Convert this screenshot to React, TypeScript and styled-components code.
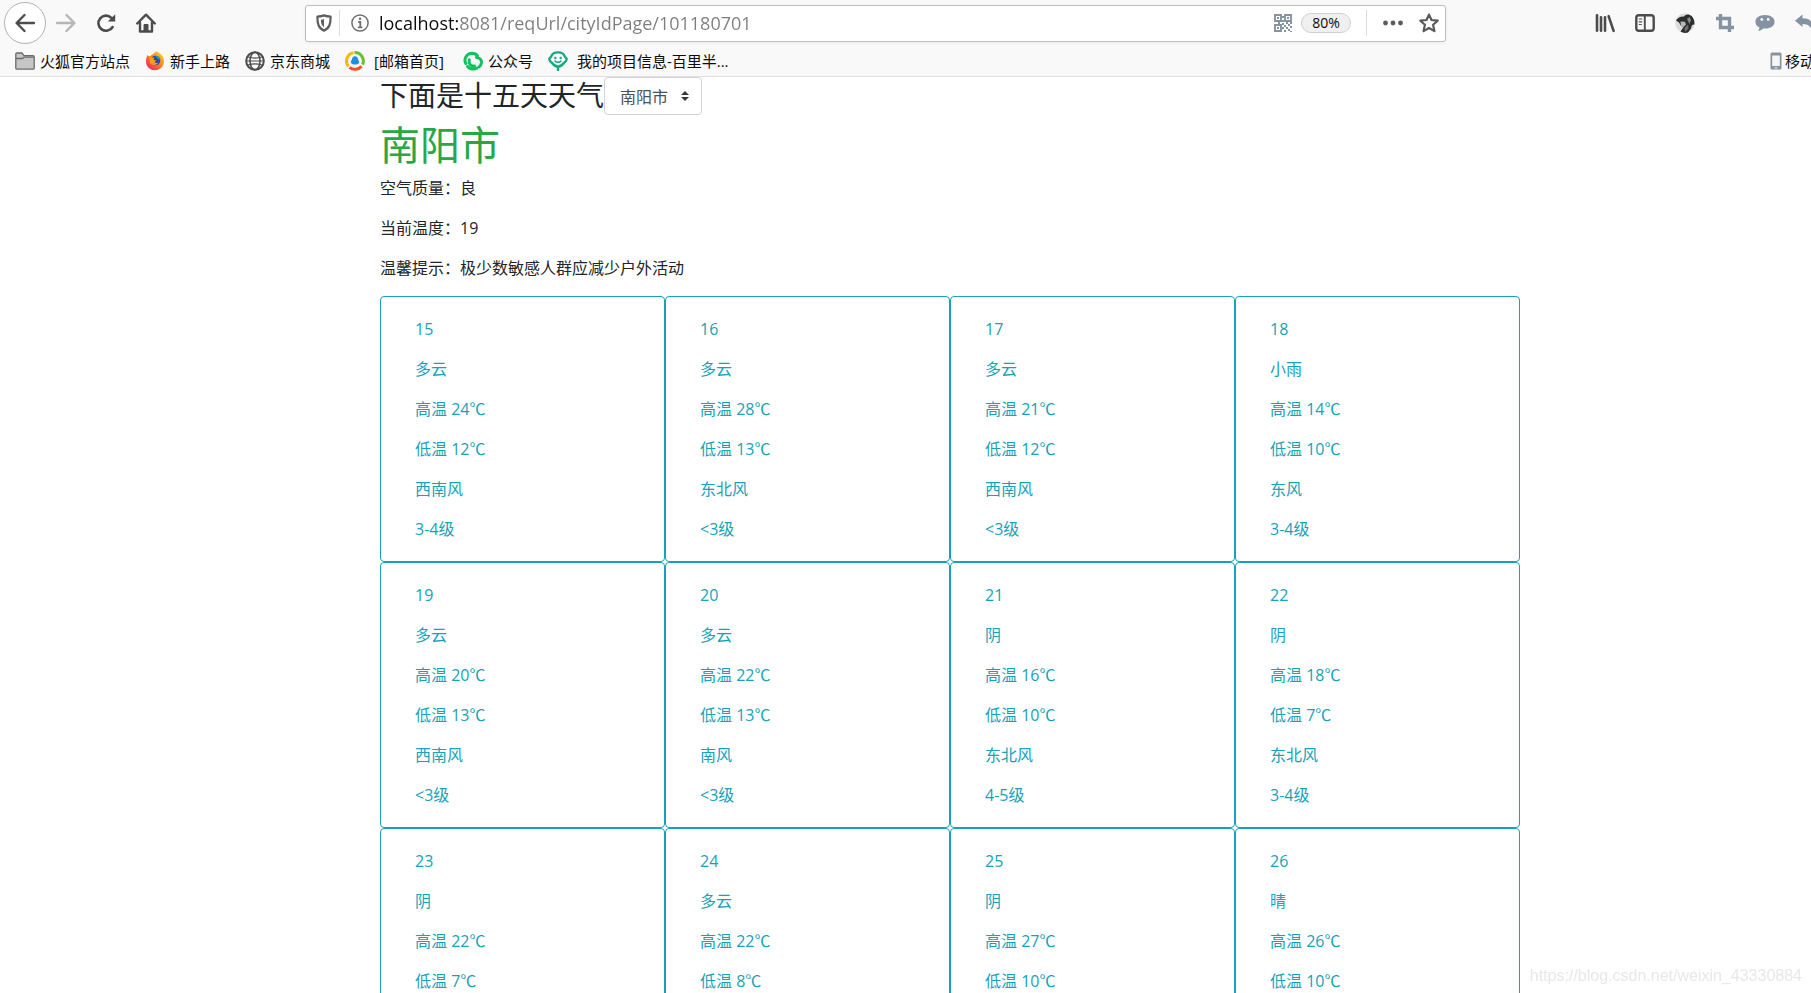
import React from "react";
import styled, { createGlobalStyle } from "styled-components";

const uiFont = `"Open Sans", "Noto Sans CJK SC", sans-serif`;

const GlobalStyle = createGlobalStyle`
  *, *::before, *::after { box-sizing: border-box; }
  body { margin: 0; background: #fff; color: #212529; font: 16px/24px ${uiFont}; }
  h1, h2, p, ul { margin: 0; padding: 0; }
  button, input, select { font: inherit; }
  svg { display: block; flex: none; }
`;

const Shell = styled.div`
  height: 100vh;
  display: flex;
  flex-direction: column;
  overflow: hidden;
`;

const Chrome = styled.header`
  flex: none;
  background: #f9f9fa;
  border-bottom: 1px solid #e0e0e1;
  overflow: hidden;
`;

const NavBar = styled.div`
  display: flex;
  align-items: center;
  height: 46px;
  padding-left: 4px;
`;

const NavButtons = styled.nav`
  flex: none;
  display: flex;
  align-items: center;
  width: 301px;
`;

const IconButton = styled.button<{ $width?: number }>`
  flex: none;
  display: flex;
  align-items: center;
  justify-content: center;
  width: ${(p) => p.$width ?? 40}px;
  height: 40px;
  padding: 0;
  border: 0;
  background: none;
`;

const BackButton = styled(IconButton)`
  width: 42px;
  height: 42px;
  border: 1px solid #b4b4b4;
  border-radius: 50%;
  background: #fff;
`;

const UrlBar = styled.div`
  flex: 1;
  min-width: 0;
  display: flex;
  align-items: center;
  height: 37px;
  padding: 0 6px 0 3px;
  border: 1px solid #bdbdbd;
  border-radius: 3px;
  background: #fff;
  box-shadow: 0 1px 4px rgba(0, 0, 0, 0.06);
`;

const Divider = styled.span`
  flex: none;
  width: 1px;
  height: 26px;
  background: #dcdcdc;
`;

const UrlInput = styled.input`
  flex: 1;
  min-width: 0;
  height: 32px;
  padding: 0;
  border: 0;
  outline: 0;
  font-size: 18px;
  color: transparent;
  background: linear-gradient(to right, #0c0c0d 79px, #7d7d7d 79px);
  background-clip: text;
  -webkit-background-clip: text;
`;

const ZoomPill = styled.button`
  flex: none;
  width: 50px;
  height: 20px;
  margin: 0 15px 0 6px;
  padding: 0;
  border: 1px solid #d0d0d1;
  border-radius: 10px;
  background: #f0f0f1;
  color: #0c0c0d;
  font-size: 14px;
  line-height: 18px;
`;

const Extensions = styled.div`
  flex: none;
  display: flex;
  width: 365px;
  padding-left: 139px;
  overflow: hidden;
`;

const BookmarkBar = styled.nav`
  display: flex;
  align-items: center;
  gap: 15px;
  height: 30px;
  padding-left: 15px;
  font-size: 15px;
  line-height: 20px;
`;

const Bookmark = styled.a<{ $inset?: boolean }>`
  flex: none;
  display: flex;
  align-items: center;
  gap: 5px;
  color: #0c0c0d;
  text-decoration: none;
  white-space: nowrap;
  span { padding: 0 ${(p) => (p.$inset ? 4 : 0)}px; }
`;

const MobileBookmarks = styled(Bookmark)`
  width: 41px;
  margin-left: auto;
  gap: 3px;
  overflow: hidden;
`;

const Page = styled.main`
  flex: 1;
  min-height: 0;
  display: grid;
  grid-template-columns: 380fr 1140fr 291fr;
  overflow: hidden;
`;

const Content = styled.div`
  grid-column: 2;
  min-width: 0;
`;

const TitleRow = styled.div`
  display: flex;
  height: 45px;
`;

const Title = styled.h2`
  font-size: 28px;
  font-weight: 400;
  line-height: 36px;
  white-space: nowrap;
`;

const SelectBox = styled.label`
  position: relative;
  width: 98px;
  height: 38px;
  svg { position: absolute; right: 13px; top: 14px; pointer-events: none; }
`;

const CitySelect = styled.select`
  width: 100%;
  height: 100%;
  padding: 2px 28px 0 15px;
  border: 1px solid #ced4da;
  border-radius: 4px;
  background: #fff;
  color: #495057;
  appearance: none;
`;

const City = styled.h1`
  margin-bottom: 8px;
  color: #28a745;
  font-size: 40px;
  font-weight: 400;
  line-height: 46px;
`;

const Info = styled.p`
  margin-bottom: 16px;
`;

const Forecast = styled.ul`
  display: grid;
  grid-template-columns: repeat(4, 1fr);
  list-style: none;
`;

const DayCard = styled.li`
  display: flex;
  flex-direction: column;
  gap: 16px;
  min-height: 266px;
  padding: 20px 34px;
  border: 1px solid #17a2b8;
  border-radius: 4px;
  color: #17a2b8;
`;

const Watermark = styled.div`
  position: fixed;
  right: 9px;
  bottom: 7px;
  color: #e8e8e8;
  font: 16px/20px "Liberation Sans", sans-serif;
`;

const dark = "#4c4c4d";
const slate = "#8592a2";

const line = { fill: "none", strokeLinecap: "round", strokeLinejoin: "round" } as const;

const BackIcon = () => (
  <svg width="20" height="20" viewBox="0 0 20 20" {...line} stroke={dark} strokeWidth="2.4">
    <path d="M19 10H2M9.5 2L1.6 10l7.9 8" />
  </svg>
);
const ForwardIcon = () => (
  <svg width="20" height="20" viewBox="0 0 20 20" {...line} stroke="#b6b6b7" strokeWidth="2.4">
    <path d="M1 10h17M10.5 2l7.9 8-7.9 8" />
  </svg>
);
const ReloadIcon = () => (
  <svg width="20" height="20" viewBox="0 0 20 20" {...line} stroke={dark} strokeWidth="2.6">
    <path d="M16.6 14A7.6 7.6 0 1 1 15.4 4.8" />
    <path d="M19.2 1.2v7.4h-7.4z" fill={dark} stroke="none" />
  </svg>
);
const HomeIcon = () => (
  <svg width="20" height="20" viewBox="0 0 20 20" {...line} stroke={dark} strokeWidth="2.4">
    <path d="M1.2 10.5L10 1.7l8.8 8.8M4 9.5v9h12v-9" />
    <path d="M8 18v-6.5h4V18z" fill={dark} strokeWidth="1" />
  </svg>
);
const ShieldIcon = () => (
  <svg width="18" height="18" viewBox="0 0 18 18" {...line} stroke="#5f5f60" strokeWidth="2.2">
    <path d="M9 1.4c2.4.9 4.4 1.2 6.6 1.3 0 6.3-.6 11.2-6.6 14C3 13.9 2.4 9 2.4 2.7 4.6 2.6 6.6 2.3 9 1.4z" />
    <path d="M9 5v8.3C6.4 11.500 6 9 5.900 5.700 7 5.600 8 5.400 9 5z" fill="#5f5f60" stroke="none" />
  </svg>
);
const InfoIcon = () => (
  <svg width="18" height="18" viewBox="0 0 18 18" fill="none" stroke="#707071" strokeWidth="1.5">
    <circle cx="9" cy="9" r="8.1" />
    <path d="M7.200 8H9.300v5.300M6.800 13.300h4.600" strokeWidth="1.8" />
    <circle cx="9" cy="4.8" r="1.3" fill="#707071" stroke="none" />
  </svg>
);
const QrIcon = () => (
  <svg width="18" height="18" viewBox="0 0 18 18" fill={slate}>
    <path d="M1 1h6v6H1zM11 1h6v6h-6zM1 11h6v6H1z" fill="none" stroke={slate} strokeWidth="1.9" />
    <path d="M3 3h2v2H3zM13 3h2v2h-2zM3 13h2v2H3zM8 2h2v2H8zM8 6h2v2H8zM4 8h2v2H4zM8 9h2v2H8zM12 8h2v2h-2zM16 8h2v2h-2zM10 11h2v2h-2zM14 10h2v2h-2zM8 13h2v2H8zM12 13h2v2h-2zM16 12h2v2h-2zM10 16h2v2h-2zM14 15h2v2h-2zM16 17h2v1h-2z" />
  </svg>
);
const DotsIcon = () => (
  <svg width="20" height="6" viewBox="0 0 20 6" fill="#5a5a5b">
    <circle cx="2.5" cy="3" r="2.4" />
    <circle cx="10" cy="3" r="2.4" />
    <circle cx="17.5" cy="3" r="2.4" />
  </svg>
);
const StarIcon = () => (
  <svg width="20" height="20" viewBox="0 0 20 20" fill="none" stroke="#5a5a5b" strokeWidth="2.2" strokeLinejoin="round">
    <path d="M10 1.6l2.5 5.4 6.2.7-4.6 4.1 1.3 6.3-5.4-3.1-5.4 3.1 1.300-6.300-4.600-4.100 6.200-.7z" />
  </svg>
);
const LibraryIcon = () => (
  <svg width="20" height="20" viewBox="0 0 20 20" fill="none" stroke={dark} strokeWidth="2.6" strokeLinecap="round">
    <path d="M2 2.200v15.600M6 4.200v13.600M10 4.200v13.600M13.600 3.200l5 14.600" />
  </svg>
);
const SidebarIcon = () => (
  <svg width="20" height="18" viewBox="0 0 20 18" {...line} stroke={dark} strokeWidth="2.4">
    <rect x="1.3" y="1.3" width="17.4" height="15.4" rx="2.5" />
    <path d="M9.8 1.5v15" strokeWidth="1.9" />
    <path d="M4.3 5h2.5M4.3 7.8h2.5M4.3 10.5h2" strokeWidth="1.2" />
  </svg>
);
const AvatarIcon = () => (
  <svg width="20" height="20" viewBox="0 0 20 20">
    <circle cx="10" cy="10" r="9.8" fill="#dcddda" />
    <path d="M1 7.500C3 4.500 6 3 9 3.500 10.500 1 14 .6 16.500 3c2.400 2.500 3.300 5.500 2.800 8.500l-2.300.5-1 3.500-3 4c-3 .8-5.500.3-7.500-1l3-4.500-2.500-1L4 9.500z" fill="#2d2e2f" />
    <path d="M5.500 8.500l4.500.3 1 2.700-2.500 2.500-2.500-1z" fill="#b7b8b5" />
    <path d="M12 6l2.500-2 1.500 3-1.500 4z" fill="#8a8b8a" />
    <path d="M9.500 15l3.500-3.500.5 4-3.500 3.500z" fill="#6d6e6d" />
  </svg>
);
const CropIcon = () => (
  <svg width="18" height="18" viewBox="0 0 18 18" fill="none" stroke={slate} strokeWidth="3.4">
    <path d="M4.500 0v13.500H18M0 4.500h13.500V18" />
  </svg>
);
const ChatIcon = () => (
  <svg width="20" height="18" viewBox="0 0 20 18">
    <path d="M10 1c5.600 0 9.600 2.800 9.600 6.700 0 4-4 6.800-9.600 6.800l-2-.1c-1.300 1.500-3 2.400-5 2.500.9-1 1.400-2 1.500-3.300C2 12.400.4 10.300.4 7.700.4 3.800 4.400 1 10 1z" fill={slate} />
    <circle cx="6.8" cy="5.5" r="1.4" fill="#f9f9fa" />
    <circle cx="13.2" cy="5.5" r="1.4" fill="#f9f9fa" />
  </svg>
);
const UndoIcon = () => (
  <svg width="20" height="18" viewBox="0 0 20 18" fill={slate}>
    <path d="M0 6.800L7.500.6v3.700c8 0 11.500 4.500 9.500 12.700-1-4.500-4-7-9.500-7V13z" />
  </svg>
);
const FolderIcon = () => (
  <svg width="20" height="20" viewBox="0 0 20 20" fill="#c6c6c7" stroke="#6b6b6c" strokeWidth="1.3" strokeLinejoin="round">
    <path d="M.8 17V3.200c0-.8.5-1.200 1.200-1.200h5l2 2.600h9c.8 0 1.200.5 1.200 1.200V17c0 .8-.4 1.200-1.200 1.200H2C1.200 18.200.8 17.800.8 17z" />
    <path d="M1 7.500h6.500l1.800-1.400H19" fill="none" />
  </svg>
);
const FirefoxIcon = () => (
  <svg width="20" height="20" viewBox="0 0 20 20">
    <defs>
      <linearGradient id="flame" x1="1" y1="0" x2="0.1" y2="1">
        <stop offset="0" stopColor="#ffe226" />
        <stop offset="0.45" stopColor="#ff8a1c" />
        <stop offset="1" stopColor="#f5156c" />
      </linearGradient>
    </defs>
    <path d="M2.500 4l1.500 1.500L6 4.500 8 3l3-2.500c2 .2 7.800 3 8 9.500.2 5-4 9.300-9 9.300S1 15.500 1 10.500c0-2.500.5-4.500 1.500-6.500z" fill="url(#flame)" />
    <circle cx="10.5" cy="9.5" r="4.8" fill="#2b4aa8" />
    <path d="M4.500 6l5 .8-1 2 2.500.7-1.500 2 3.500.5c-1.500 2.500-6 2.500-8 0z" fill="#ff9a1f" />
    <path d="M10 4.800c2.600-.2 4.800 1.700 5.200 4.200L13 8z" fill="#1a9be8" />
  </svg>
);
const GlobeIcon = () => (
  <svg width="20" height="20" viewBox="0 0 20 20" fill="none" stroke={dark} strokeWidth="1.5">
    <circle cx="10" cy="10" r="8.8" strokeWidth="2" />
    <ellipse cx="10" cy="10" rx="5" ry="8.8" />
    <path d="M2.500 5.800C7 7.300 13 7.300 17.500 5.800M2.500 14.200c4.500-1.500 10.500-1.500 15 0M1.500 10h17" strokeWidth="1.2" />
  </svg>
);
const MailIcon = () => (
  <svg width="20" height="20" viewBox="0 0 20 20" fill="none" strokeWidth="3">
    <path d="M3.500 15.500A8.400 8.400 0 0 1 8.500 1.800" stroke="#f9b51c" />
    <path d="M9.500 1.600a8.400 8.400 0 0 1 8 12" stroke="#6abf2e" />
    <path d="M16.500 15.200A8.400 8.400 0 0 1 4.500 16.300" stroke="#f4511e" />
    <path d="M10 5.300c2 0 3 1.500 3 3.300 1.100 1.300 1.400 2.600.9 3.500-1.400 2-6.400 2-7.800 0-.5-.9-.2-2.200.9-3.500 0-1.800 1-3.300 3-3.300z" fill="#1b8fe0" />
  </svg>
);
const PublicAccountIcon = () => (
  <svg width="20" height="20" viewBox="0 0 20 20" fill="none" stroke="#10c160" strokeWidth="3" strokeLinecap="round">
    <path d="M2.800 12.500C.5 8 3.500 2.600 9 2.300c2.400 0 4.300.9 5.500 2.500" />
    <path d="M13.500 6.500c3 .3 5.200 2.400 5 5.200-.2 1.900-1.100 3.300-2.500 4.200" />
    <path d="M6.300 8.800c-1 3.500 1 6.700 5.200 6.300M4.500 15.500c2 2.600 6.300 3.300 9.500 1.500" />
  </svg>
);
const ProjectIcon = () => (
  <svg width="20" height="20" viewBox="0 0 20 20" {...line} stroke="#17a884" strokeWidth="2.4">
    <path d="M10 1.400C6.500 1.400 4 3 3.200 5.500L1.300 7.800c.2 1.700 1 3 2.400 3.700 1.300 2 3.500 3.800 6.300 4.300 2.800-.5 5-2.300 6.300-4.300 1.400-.7 2.200-2 2.400-3.700l-1.900-2.300C16 3 13.500 1.400 10 1.400z" />
    <path d="M7 10c1.300 1.800 4.700 1.800 6 0" strokeWidth="1.5" />
    <circle cx="7.3" cy="7" r="1.2" fill="#17a884" stroke="none" />
    <circle cx="12.7" cy="7" r="1.2" fill="#17a884" stroke="none" />
    <path d="M10 16.500V19" />
  </svg>
);
const PhoneIcon = () => (
  <svg width="12" height="18" viewBox="0 0 12 18">
    <rect x=".5" y=".5" width="11" height="17" rx="1.5" fill="#8a9199" />
    <path d="M2.200 3.500h7.600v10.500H2.200z" fill="#f4f6f8" />
    <path d="M4.500 15.200h3v1.200h-3z" fill="#e0e3e6" />
  </svg>
);
const CaretIcon = () => (
  <svg width="8" height="10" viewBox="0 0 8 10" fill="#343a40">
    <path d="M4 0l4 4H0zM4 10L0 6h8z" />
  </svg>
);

const bookmarks = [
  { text: "火狐官方站点", icon: <FolderIcon /> },
  { text: "新手上路", icon: <FirefoxIcon /> },
  { text: "京东商城", icon: <GlobeIcon /> },
  { text: "[邮箱首页]", icon: <MailIcon />, inset: true },
  { text: "公众号", icon: <PublicAccountIcon /> },
  { text: "我的项目信息-百里半...", icon: <ProjectIcon />, inset: true },
];

const days: string[][] = [
  ["15", "多云", "高温 24℃", "低温 12℃", "西南风", "3-4级"],
  ["16", "多云", "高温 28℃", "低温 13℃", "东北风", "<3级"],
  ["17", "多云", "高温 21℃", "低温 12℃", "西南风", "<3级"],
  ["18", "小雨", "高温 14℃", "低温 10℃", "东风", "3-4级"],
  ["19", "多云", "高温 20℃", "低温 13℃", "西南风", "<3级"],
  ["20", "多云", "高温 22℃", "低温 13℃", "南风", "<3级"],
  ["21", "阴", "高温 16℃", "低温 10℃", "东北风", "4-5级"],
  ["22", "阴", "高温 18℃", "低温 7℃", "东北风", "3-4级"],
  ["23", "阴", "高温 22℃", "低温 7℃"],
  ["24", "多云", "高温 22℃", "低温 8℃"],
  ["25", "阴", "高温 27℃", "低温 10℃"],
  ["26", "晴", "高温 26℃", "低温 10℃"],
];

export default function App() {
  return (
    <Shell>
      <GlobalStyle />
      <Chrome>
        <NavBar>
          <NavButtons>
            <BackButton aria-label="后退"><BackIcon /></BackButton>
            <IconButton aria-label="前进"><ForwardIcon /></IconButton>
            <IconButton aria-label="刷新"><ReloadIcon /></IconButton>
            <IconButton aria-label="主页"><HomeIcon /></IconButton>
          </NavButtons>
          <UrlBar>
            <IconButton $width={30} aria-label="跟踪保护"><ShieldIcon /></IconButton>
            <Divider />
            <IconButton $width={39} aria-label="网站信息"><InfoIcon /></IconButton>
            <UrlInput aria-label="地址" defaultValue="localhost:8081/reqUrl/cityIdPage/101180701" />
            <IconButton $width={24} aria-label="二维码"><QrIcon /></IconButton>
            <ZoomPill>80%</ZoomPill>
            <Divider />
            <IconButton $width={52} aria-label="更多"><DotsIcon /></IconButton>
            <IconButton $width={20} aria-label="收藏"><StarIcon /></IconButton>
          </UrlBar>
          <Extensions>
            <IconButton aria-label="书库"><LibraryIcon /></IconButton>
            <IconButton aria-label="侧栏"><SidebarIcon /></IconButton>
            <IconButton aria-label="账户"><AvatarIcon /></IconButton>
            <IconButton aria-label="截图"><CropIcon /></IconButton>
            <IconButton aria-label="消息"><ChatIcon /></IconButton>
            <IconButton aria-label="撤销"><UndoIcon /></IconButton>
          </Extensions>
        </NavBar>
        <BookmarkBar>
          {bookmarks.map((b) => (
            <Bookmark key={b.text} href="#" $inset={b.inset}>
              {b.icon}
              <span>{b.text}</span>
            </Bookmark>
          ))}
          <MobileBookmarks href="#">
            <PhoneIcon />
            <span>移动</span>
          </MobileBookmarks>
        </BookmarkBar>
      </Chrome>
      <Page>
        <Content>
          <TitleRow>
            <Title>下面是十五天天气</Title>
            <SelectBox>
              <CitySelect aria-label="城市" defaultValue="南阳市">
                <option>南阳市</option>
              </CitySelect>
              <CaretIcon />
            </SelectBox>
          </TitleRow>
          <City>南阳市</City>
          <Info>空气质量：良</Info>
          <Info>当前温度：19</Info>
          <Info>温馨提示：极少数敏感人群应减少户外活动</Info>
          <Forecast>
            {days.map((lines) => (
              <DayCard key={lines[0]}>
                {lines.map((text, i) => (
                  <p key={i}>{text}</p>
                ))}
              </DayCard>
            ))}
          </Forecast>
        </Content>
      </Page>
      <Watermark>https://blog.csdn.net/weixin_43330884</Watermark>
    </Shell>
  );
}
